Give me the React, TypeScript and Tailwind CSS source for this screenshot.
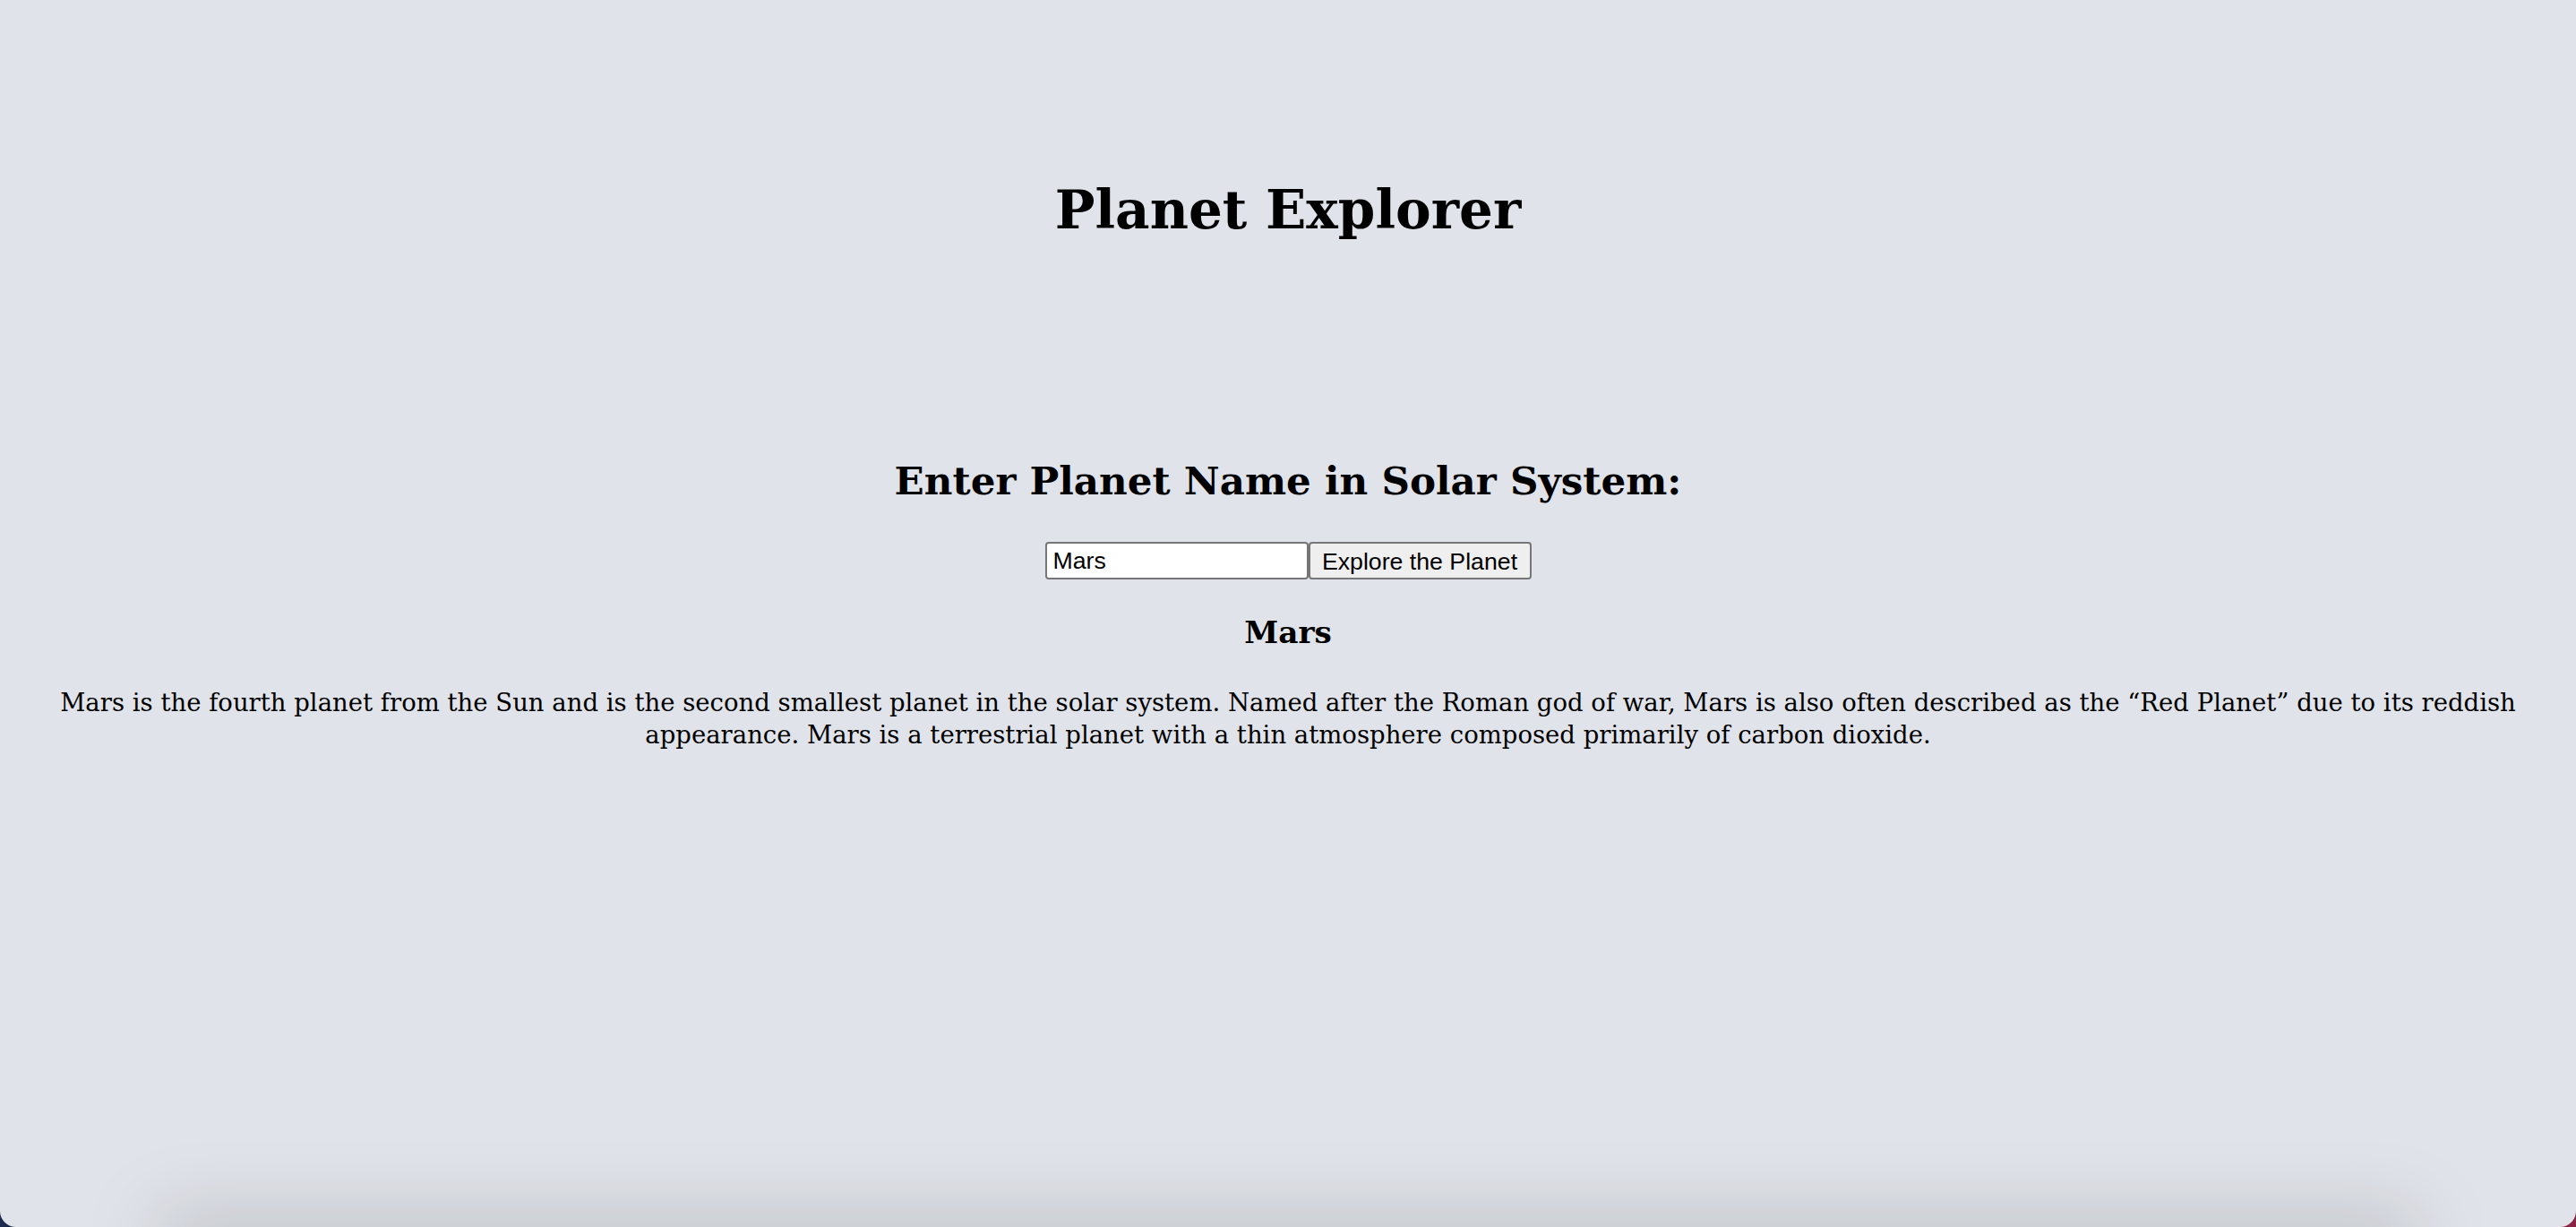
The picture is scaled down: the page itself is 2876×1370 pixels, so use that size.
import React from "react";

export default function App() {
  return (
    <div className="w-full h-[1370px] bg-[linear-gradient(90deg,#1c2b4f_0%,#1c2b4f_50%,#8a2346_50%,#8a2346_100%)]">
      <div className="relative h-full w-full overflow-hidden rounded-b-[18px] bg-[#e0e3e9] text-black [font-family:'DejaVu_Serif',Georgia,serif]">
        <main className="flex flex-col items-center text-center">
          <h1 className="mt-[197px] text-[59.5px] leading-[75px] font-bold">Planet Explorer</h1>
          <h2 className="mt-[237px] text-[43.6px] leading-[55px] font-bold">Enter Planet Name in Solar System:</h2>
          <div className="mt-[41px] flex items-center">
            <input
              defaultValue="Mars"
              className="h-[42px] w-[294px] rounded-[4px] border-2 border-[#767676] bg-white px-[7px] text-[26.7px] text-black outline-none [font-family:'Liberation_Sans',Arial,sans-serif]"
            />
            <button className="h-[42px] w-[249px] rounded-[4px] border-2 border-[#767676] bg-[#efefef] text-[26.7px] text-black [font-family:'Liberation_Sans',Arial,sans-serif]">
              Explore the Planet
            </button>
          </div>
          <h3 className="mt-[38px] text-[34.3px] leading-[43px] font-bold">Mars</h3>
          <p className="mt-[38px] px-[16px] text-[27.5px] leading-[36px]">
            <span className="whitespace-nowrap">
              Mars is the fourth planet from the Sun and is the second smallest planet in the solar system. Named after the Roman god of war, Mars is also often described as the “Red Planet” due to its reddish
            </span>
            <br />
            appearance. Mars is a terrestrial planet with a thin atmosphere composed primarily of carbon dioxide.
          </p>
        </main>
        <div className="pointer-events-none absolute bottom-[-44px] left-[170px] right-[170px] h-[60px] rounded-full bg-black/15 blur-2xl" />
      </div>
    </div>
  );
}
